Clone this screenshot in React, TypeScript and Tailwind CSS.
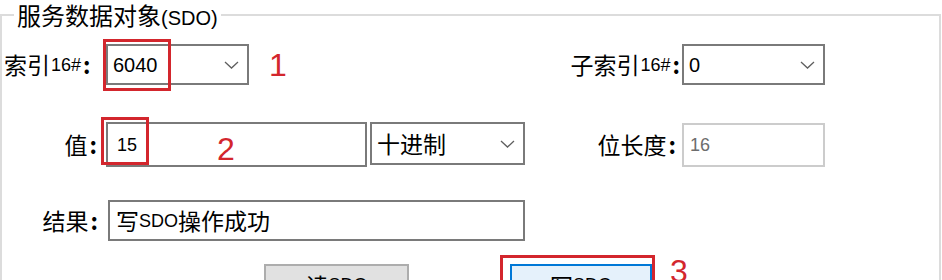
import React from 'react'

const CJK = "font-['Noto_Sans_CJK_SC',sans-serif]"
const LAT = "font-['Liberation_Sans',sans-serif]"

function Chevron() {
  return (
    <svg width="15" height="8" viewBox="0 0 15 8" className="flex-shrink-0">
      <path d="M1 1 L7.5 7 L14 1" fill="none" stroke="#5f5f5f" strokeWidth="1.3" />
    </svg>
  )
}

function Label({ cjk, hex, className = '' }: { cjk: string; hex?: boolean; className?: string }) {
  return (
    <span className={`flex items-center text-[23px] leading-none ${className}`}>
      <span>{cjk}</span>
      {hex && <span className={`${LAT} text-[18px] ml-[1px]`}>16#</span>}
      <span className="ml-[2px] font-bold">:</span>
    </span>
  )
}

function Combo({ value, width, cjkText }: { value: string; width: string; cjkText?: boolean }) {
  return (
    <div className={`${width} h-full flex items-center justify-between bg-white border-2 border-[#7a7a7a] pl-[5px] pr-[8px]`}>
      <span className={cjkText ? 'text-[23px] leading-none' : `${LAT} text-[20px] leading-none`}>{value}</span>
      <Chevron />
    </div>
  )
}

function RedNum({ n, className }: { n: string; className: string }) {
  return <span className={`${LAT} text-[32px] leading-none text-[#d3262d] ${className}`}>{n}</span>
}

export default function App() {
  return (
    <div className={`h-[280px] w-[942px] overflow-hidden bg-white text-black ${CJK}`}>
      <fieldset className="mr-[1px] h-[400px] border-2 border-b-0 border-[#dcdcdc]">
        <legend className="ml-[12px] px-[3px] pt-[3px] text-[24px] leading-[24px]">
          服务数据对象<span className={`${LAT} text-[20px]`}>(SDO)</span>
        </legend>

        {/* 索引 / 子索引 */}
        <div className="mt-[14px] flex h-[41px] items-center">
          <div className="w-[104px] pl-[2px]">
            <Label cjk="索引" hex />
          </div>
          <div className="relative h-full">
            <Combo value="6040" width="w-[143px]" />
            <div className="absolute left-[-3px] top-[-5px] h-[52px] w-[68px] border-[3px] border-[#d3262d]" />
          </div>
          <RedNum n="1" className="ml-[20px]" />
          <div className="flex h-full flex-1 items-center justify-end pr-[114px]">
            <Label cjk="子索引" hex className="mr-[2px]" />
            <Combo value="0" width="w-[143px]" />
          </div>
        </div>

        {/* 值 / 位长度 */}
        <div className="mt-[37px] flex h-[45px] items-start">
          <div className="flex h-[45px] w-[104px] items-center justify-end pr-[9px]">
            <Label cjk="值" />
          </div>
          <div className="relative flex h-[45px] w-[261px] items-center border-2 border-[#7a7a7a] pl-[9px]">
            <span className={`${LAT} text-[18px] leading-none`}>15</span>
            <RedNum n="2" className="absolute left-[109px] top-[9px]" />
            <div className="absolute left-[-7px] top-[-7px] h-[48px] w-[48px] border-[3px] border-[#d3262d]" />
          </div>
          <div className="ml-[3px] h-[43px]">
            <Combo value="十进制" width="w-[155px]" cjkText />
          </div>
          <div className="flex h-[45px] flex-1 items-center justify-end pr-[114px]">
            <Label cjk="位长度" className="mr-[6px]" />
            <div className="mt-[1px] flex h-[44px] w-[143px] items-center border-2 border-[#cccccc] pl-[6px]">
              <span className={`${LAT} text-[18px] leading-none text-[#6d6d6d]`}>16</span>
            </div>
          </div>
        </div>

        {/* 结果 */}
        <div className="mt-[33px] flex h-[41px] items-center">
          <div className="flex w-[106px] justify-end pr-[10px]">
            <Label cjk="结果" />
          </div>
          <div className="flex h-full w-[417px] items-center border-2 border-[#7a7a7a] pl-[6px] text-[23px] leading-none">
            写<span className={`${LAT} text-[18px]`}>SDO</span>操作成功
          </div>
        </div>

        {/* 按钮 */}
        <div className="mt-[23px] flex h-[42px] items-start">
          <button className="ml-[262px] flex h-[42px] w-[145px] items-center justify-center border-2 border-[#adadad] bg-[#e1e1e1] text-[23px] leading-none">
            读<span className={`${LAT} text-[18px]`}>SDO</span>
          </button>
          <div className="relative ml-[101px]">
            <button className="flex h-[42px] w-[142px] items-center justify-center border-2 border-[#0078d7] bg-[#e5f1fb] text-[23px] leading-none">
              写<span className={`${LAT} text-[18px]`}>SDO</span>
            </button>
            <div className="absolute left-[-10px] top-[-9px] h-[60px] w-[155px] border-[3px] border-[#d3262d]" />
            <RedNum n="3" className="absolute left-[160px] top-[-9px]" />
          </div>
        </div>
      </fieldset>
    </div>
  )
}
